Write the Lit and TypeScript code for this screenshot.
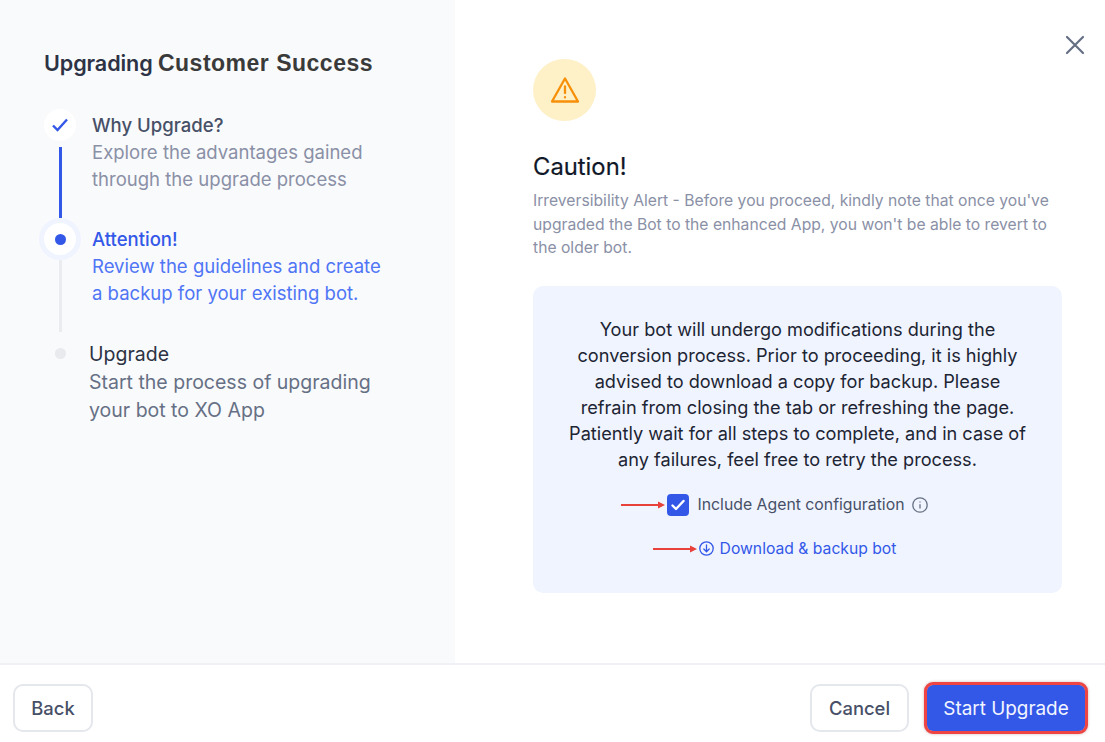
import { LitElement, html, css } from "lit";
import { customElement } from "lit/decorators.js";

@customElement("app-root")
export class AppRoot extends LitElement {
  static styles = css`
    :host { display: flex; flex-direction: column; width: 1105px; height: 742px; background: #fff; font-family: Inter, "Liberation Sans", sans-serif; color: #101828; overflow: hidden; }
    * { box-sizing: border-box; }
    .top { display: flex; height: 663px; flex: none; }
    .side { width: 455px; flex: none; background: #f9fafc; padding: 48px 0 0 44px; }
    h1 { margin: 0 0 31px; font-size: 21.6px; line-height: 30px; font-weight: 600; color: #2d3344; white-space: nowrap; letter-spacing: -0.1px; }
    h1 span { font-family: "Liberation Sans", Arial, sans-serif; font-weight: 700; color: #3a3a3a; font-size: 23px; letter-spacing: .5px; }
    .step { display: flex; gap: 16px; }
    .step.last { gap: 13px; }
    .marker { width: 32px; flex: none; display: flex; flex-direction: column; align-items: center; }
    .circle { width: 32px; height: 32px; border-radius: 50%; background: #fff; display: flex; align-items: center; justify-content: center; flex: none; }
    .ring { width: 42px; height: 42px; border: 5px solid #f0f4ff; background: #fff; border-radius: 50%; display: flex; align-items: center; justify-content: center; flex: none; }
    .ring i { width: 11px; height: 11px; border-radius: 50%; background: #3358e8; }
    .line { width: 3px; flex: none; }
    .line.done { height: 71px; margin-top: 6px; background: #3358e8; }
    .line.todo { height: 72px; background: #eaecf0; }
    .dot { width: 11px; height: 11px; border-radius: 50%; background: #e8eaee; margin-top: 16px; }
    .text { font-size: 18.55px; line-height: 27px; white-space: nowrap; }
    .text b { display: block; font-weight: 500; }
    .s1 .text { padding-top: 3px; color: #8a90a6; }
    .s1 b { color: #475067; }
    .s2 .text { padding-top: 8px; color: #4f75f5; }
    .s2 b { color: #3358e8; }
    .s3 .text { padding-top: 8px; color: #667085; font-size: 19.5px; line-height: 28px; }
    .s3 b { color: #2d3344; font-weight: 400; }
    .main { flex: 1; display: flex; padding: 59px 0 0 78px; gap: 3px; }
    .content { width: 529px; flex: none; }
    .close { margin-top: -24px; width: 20px; height: 20px; flex: none; }
    .warn { width: 63px; height: 62px; border-radius: 50%; background: #fef0c7; display: flex; align-items: center; justify-content: center; }
    h2 { margin: 30px 0 0; font-size: 23.8px; line-height: 32px; font-weight: 400; color: #101828; -webkit-text-stroke: 0.2px #101828; }
    .desc { margin: 6px 0 0; font-size: 15.7px; line-height: 23.5px; color: #8a90a6; width: 529px; }
    .box { margin-top: 26px; height: 307px; background: #eff4ff; border-radius: 10px; padding: 30px 0 0; display: flex; flex-direction: column; align-items: center; }
    .box p { margin: 0; width: 466px; text-align: center; font-size: 18.15px; line-height: 26px; color: #1d2433; }
    .check { margin-top: 22px; display: flex; align-items: center; height: 22px; font-size: 15.8px; color: #475067; font-weight: 400; }
    .cb { position: relative; width: 22px; height: 22px; border-radius: 4px; background: #3358e8; display: flex; align-items: center; justify-content: center; margin-right: 9px; flex: none; }
    .arrow { position: absolute; right: calc(100% + 1px); top: 50%; margin-top: -5px; width: 45px; height: 10px; }
    .info { margin-left: 8px; }
    .dl { margin-top: 22px; display: flex; align-items: center; height: 22px; font-size: 15.7px; color: #3358e8; font-weight: 400; }
    .dlicon { position: relative; display: flex; width: 15px; height: 15px; margin-right: 6px; flex: none; }
    .footer { flex: 1; border-top: 2px solid #f0f1f4; display: flex; justify-content: space-between; padding: 19px 20px 0 13px; align-items: flex-start; }
    .right { display: flex; align-items: flex-start; gap: 18px; }
    button { font-family: inherit; font-size: 18.4px; font-weight: 500; height: 48px; border-radius: 10px; background: #fff; border: 2px solid #e4e7ec; color: #475067; padding: 0; }
    .back { width: 80px; }
    .cancel { width: 99px; }
    .start { width: 158px; height: 46px; margin-top: 1px; font-size: 18.9px; background: #3358e8; color: #f2f5ff; border: 0; border-radius: 6px; outline: 3px solid #ee4444; font-weight: 400; box-shadow: 0 0 3px 3px rgba(120,40,40,.35); }
  `;

  render() {
    const redArrow = html`<svg class="arrow" viewBox="0 0 45 10"><path d="M0 5H38" stroke="#e8403a" stroke-width="1.8"/><path d="M37 1.5L44 5L37 8.5Z" fill="#e8403a"/></svg>`;
    return html`
      <div class="top">
        <aside class="side">
          <h1>Upgrading <span>Customer Success</span></h1>
          <div class="step s1">
            <div class="marker">
              <div class="circle"><svg width="18" height="16" viewBox="0 0 18 16" fill="none"><path d="M2 8.5L6.5 13L16 2.5" stroke="#3358e8" stroke-width="2.4"/></svg></div>
              <div class="line done"></div>
            </div>
            <div class="text"><b>Why Upgrade?</b>Explore the advantages gained<br>through the upgrade process</div>
          </div>
          <div class="step s2">
            <div class="marker">
              <div class="ring"><i></i></div>
              <div class="line todo"></div>
            </div>
            <div class="text"><b>Attention!</b>Review the guidelines and create<br>a backup for your existing bot.</div>
          </div>
          <div class="step s3 last">
            <div class="marker"><div class="dot"></div></div>
            <div class="text"><b>Upgrade</b>Start the process of upgrading<br>your bot to XO App</div>
          </div>
        </aside>
        <main class="main">
          <div class="content">
            <div class="warn">
              <svg width="30" height="28" viewBox="0 0 30 28" fill="none" stroke="#f79009" stroke-width="2.3" stroke-linejoin="round" stroke-linecap="round">
                <path d="M15 2.5L28 25.5H2Z"/><path d="M15 10.5V17"/><path d="M15 21.2V21.4"/>
              </svg>
            </div>
            <h2>Caution!</h2>
            <p class="desc">Irreversibility Alert - Before you proceed, kindly note that once you've upgraded the Bot to the enhanced App, you won't be able to revert to the older bot.</p>
            <div class="box">
              <p>Your bot will undergo modifications during the conversion process. Prior to proceeding, it is highly advised to download a copy for backup. Please refrain from closing the tab or refreshing the page. Patiently wait for all steps to complete, and in case of any failures, feel free to retry the process.</p>
              <div class="check">
                <span class="cb">${redArrow}<svg width="14" height="12" viewBox="0 0 14 12" fill="none"><path d="M1.5 6.5L5 10L12.5 2" stroke="#fff" stroke-width="2.4" stroke-linecap="round" stroke-linejoin="round"/></svg></span>
                Include Agent configuration
                <svg class="info" width="16" height="16" viewBox="0 0 16 16" fill="none" stroke="#667085" stroke-width="1.3"><circle cx="8" cy="8" r="7.2"/><path d="M8 7.2V11.5" /><path d="M8 4.4V5.6"/></svg>
              </div>
              <div class="dl">
                <span class="dlicon">${redArrow}<svg width="15" height="15" viewBox="0 0 15 15" fill="none" stroke="#3358e8" stroke-width="1.3" stroke-linecap="round" stroke-linejoin="round"><circle cx="7.5" cy="7.5" r="6.7"/><path d="M7.5 4V10.5M4.8 8L7.5 10.7L10.2 8"/></svg></span>
                Download &amp; backup bot
              </div>
            </div>
          </div>
          <svg class="close" viewBox="0 0 20 20" fill="none" stroke="#667085" stroke-width="2.2" stroke-linecap="round"><path d="M2 2L18 18M18 2L2 18"/></svg>
        </main>
      </div>
      <footer class="footer">
        <button class="back">Back</button>
        <div class="right">
          <button class="cancel">Cancel</button>
          <button class="start">Start Upgrade</button>
        </div>
      </footer>
    `;
  }
}
